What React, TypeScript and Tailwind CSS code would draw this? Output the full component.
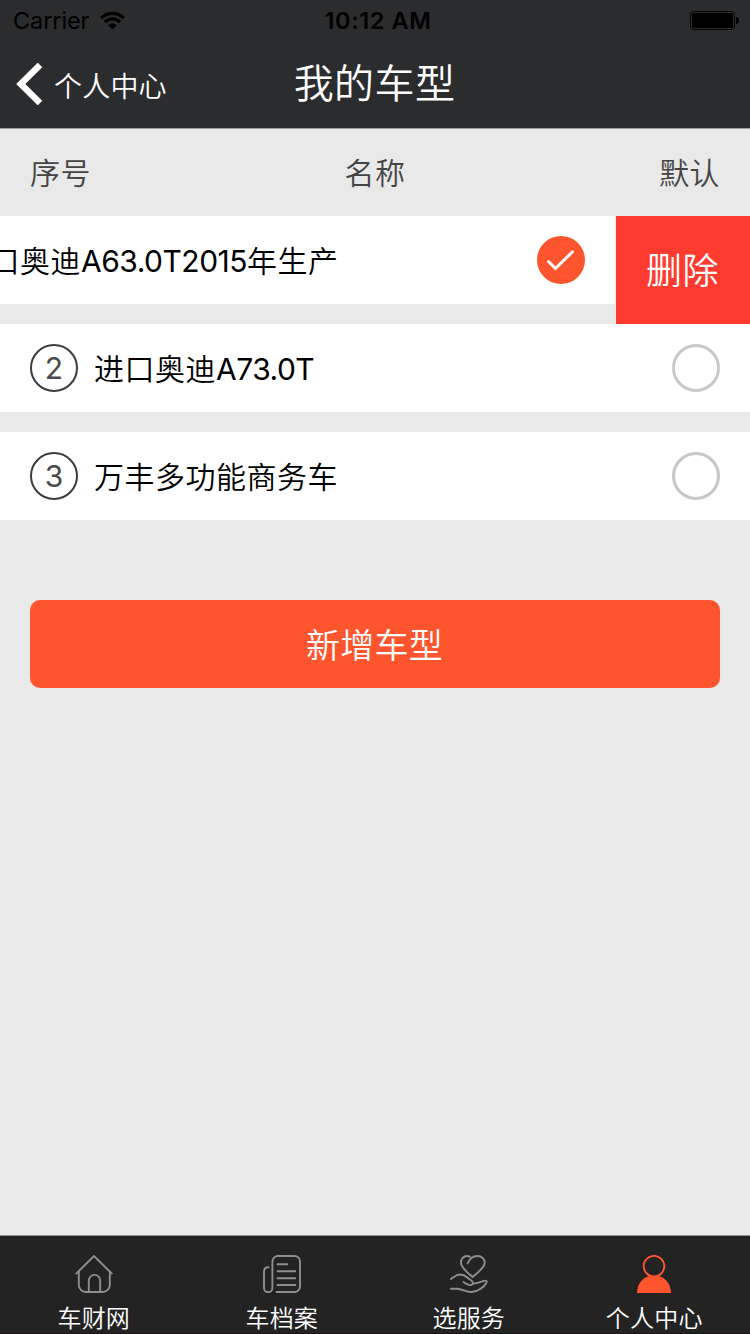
import React, { useState } from 'react';

interface Car {
  id: number;
  name: string;
}

interface CarRowProps {
  car: Car;
  selected: boolean;
  swiped: boolean;
  onSelect: () => void;
  onDelete: () => void;
}

const initialCars: Car[] = [
  { id: 1, name: '进口奥迪A63.0T2015年生产' },
  { id: 2, name: '进口奥迪A73.0T' },
  { id: 3, name: '万丰多功能商务车' }
];

const tabs = [
  { label: '车财网', icon: HomeIcon, className: '' },
  { label: '车档案', icon: FileIcon, className: 'pl-px' },
  { label: '选服务', icon: ServiceIcon, className: '' },
  { label: '个人中心', icon: UserIcon, className: 'pr-1' }
];

function HomeIcon() {
  return (
    <svg width="38" height="38" viewBox="0 0 38 38" fill="none" stroke="#8e8e8e" strokeWidth="1.9" strokeLinecap="round">
      <path d="M1.2 18.6 19 1l17.8 17.6" />
      <path d="M3.8 16.5V30a7 7 0 0 0 7 7h17a7 7 0 0 0 7-7V16.5" />
      <path d="M13.8 37V25.6a5.7 5.7 0 0 1 11.4 0V37" />
    </svg>
  );
}

function FileIcon() {
  return (
    <svg width="38" height="38" viewBox="0 0 38 38" fill="none" stroke="#8e8e8e" strokeWidth="1.9" strokeLinecap="round">
      <path d="M5.5 12.2C2.6 12.2 1 13.9 1 16.7V33a4.2 4.2 0 0 0 8.4 0V6.5A5.5 5.5 0 0 1 14.9 1H31.5A5.5 5.5 0 0 1 37 6.5v25a5.5 5.5 0 0 1-5.5 5.5h-18" />
      <path d="M14.5 9.3h9.8M14.5 16.3h17.8M14.5 23.3h17.8M14.5 30h17.8" />
    </svg>
  );
}

function ServiceIcon() {
  return (
    <svg width="38" height="38" viewBox="0 0 38 38" fill="none" stroke="#8e8e8e" strokeWidth="1.9" strokeLinecap="round" strokeLinejoin="round">
      <path d="M17.6 8.4C19 5 22.5 1 27.5 1c4.2 0 7.2 3 7.2 6.8 0 5-6.7 9.5-12.2 14.2C17.5 17.5 11 13 11 7.5 11 4 13.5 1 17 1c1 0 2 .2 2.8.8" />
      <path d="M.9 24C4 21.5 6.5 19.5 10 19.5c5 0 6.5 2.5 9.5 4.7 2.5 1.5 4.2 2.5 3.2 4.6-1.2 2.5-5.5 1-9.2-1.8" />
      <path d="M22.8 28.6c4.5 0 8-1.8 11.2-2.8 2-.6 3.3.5 2.3 2.2C34.5 31.5 28 37 21.5 37 16 37 12 34 7 33.8H1" />
    </svg>
  );
}

function UserIcon() {
  return (
    <svg width="34" height="38" viewBox="0 0 34 38" fill="none">
      <path d="M0 38C0 28 7 20.2 17 20.2S34 28 34 38Z" fill="#ff552e" />
      <circle cx="17" cy="11.2" r="10.3" fill="#232323" stroke="#ff552e" strokeWidth="1.9" />
    </svg>
  );
}

function StatusBar() {
  return (
    <div className="flex h-10 items-center justify-between pl-[13px] pr-[11px] text-black">
      <div className="flex flex-1 items-center gap-[11px]">
        <span className="pt-px text-[23.5px] leading-10 tracking-[-0.1px]">Carrier</span>
        <svg width="25" height="19" viewBox="0 0 25 19" fill="none" stroke="currentColor" strokeWidth="3.2">
          <path d="M1.2 7C7.5.7 17.5.7 23.8 7" />
          <path d="M5 11c4.3-4.2 10.7-4.2 15 0" />
          <path d="M8.2 14.3c2.6-2.3 6-2.3 8.6 0L12.5 18.5Z" fill="currentColor" stroke="none" />
        </svg>
      </div>
      <span className="pl-[4px] pt-px text-[23.5px] font-semibold leading-10 tracking-[0.6px]">10:12 AM</span>
      <div className="flex flex-1 items-center justify-end gap-px">
        <div className="h-[19px] w-[45px] rounded-[4px] border border-black p-px">
          <div className="h-full rounded-[2px] bg-black" />
        </div>
        <div className="h-[7px] w-[3px] rounded-r-full bg-black" />
      </div>
    </div>
  );
}

// Latin letters and digits are set a little tighter than the Chinese text
function CarName({ name }: { name: string }) {
  return (
    <span className="ml-4 flex-1 whitespace-nowrap pt-px text-[30px] leading-[44px] tracking-[0.5px] text-black">
      {name.split(/([A-Z0-9.]+)/).map((part, i) =>
        i % 2 ? <span key={i} className="font-normal tracking-[-0.5px]">{part}</span> : part
      )}
    </span>
  );
}

function CarRow({ car, selected, swiped, onSelect, onDelete }: CarRowProps) {
  return (
    <li className={`flex h-[108px] ${swiped ? '-ml-[135px] w-[885px]' : 'w-[750px]'}`}>
      <div className="flex h-[88px] w-[750px] shrink-0 items-center bg-white px-[30px]">
        <span className="flex h-12 w-12 items-center justify-center rounded-full border-2 border-[#3c3c3c] text-[30px] font-normal text-[#4a4a4a]">
          {car.id}
        </span>
        <CarName name={car.name} />
        <button onClick={onSelect} className="h-12 w-12">
          {selected ? (
            <svg width="48" height="48" viewBox="0 0 48 48" fill="none">
              <circle cx="24" cy="24" r="24" fill="#ff552e" />
              <path d="m11.5 25.5 7 7L35.5 15.8" stroke="#fff" strokeWidth="3" strokeLinecap="round" />
            </svg>
          ) : (
            <span className="block h-12 w-12 rounded-full border-3 border-[#c7c7c7]" />
          )}
        </button>
      </div>
      {swiped && (
        <button onClick={onDelete} className="ml-px h-[108px] w-[134px] bg-[#ff3b30] pr-px pt-0.5 text-[36px] tracking-[0.4px] text-white">
          删除
        </button>
      )}
    </li>
  );
}

export default function App() {
  const [cars, setCars] = useState(initialCars);
  const [selectedId, setSelectedId] = useState(1);
  const [activeTab, setActiveTab] = useState(3);

  const handleDelete = (id: number) => {
    setCars(prev => prev.filter(car => car.id !== id));
  };

  return (
    <div className="flex h-[1334px] w-[750px] flex-col overflow-hidden bg-[#e9e9e9] font-['Inter','Noto_Sans_CJK_SC',sans-serif]">
      <header className="h-[129px] shrink-0 border-b border-[#9a9a9a] bg-[#2b2c2e]">
        <StatusBar />
        <div className="grid h-[88px] grid-cols-3 items-center font-[350] text-white">
          <button className="flex items-center gap-[11px] pl-4">
            <svg width="27" height="42" viewBox="0 0 27 42" fill="none" stroke="currentColor" strokeWidth="6.5">
              <path d="M24 2 4.8 21 24 40" />
            </svg>
            <span className="pt-[6px] text-[28px] leading-10 tracking-[0.2px]">个人中心</span>
          </button>
          <h1 className="pb-px pr-px text-center text-[40px] leading-[56px] tracking-[0.4px]">我的车型</h1>
        </div>
      </header>

      <main className="flex-1">
        <div className="flex h-[87px] items-center justify-between px-[30px] pt-px text-[30px] font-[350] tracking-[0.4px] text-[#444]">
          <span>序号</span>
          <span>名称</span>
          <span>默认</span>
        </div>
        <ul className="overflow-hidden font-[350]">
          {cars.map(car => (
            <CarRow
              key={car.id}
              car={car}
              selected={car.id === selectedId}
              swiped={car.id === 1}
              onSelect={() => setSelectedId(car.id)}
              onDelete={() => handleDelete(car.id)}
            />
          ))}
        </ul>
        <div className="px-[30px] pt-[60px]">
          <button className="h-[88px] w-full rounded-[10px] bg-[#ff552e] pr-px pt-0.5 text-[34px] font-[350] tracking-[0.3px] text-white">
            新增车型
          </button>
        </div>
      </main>

      <nav className="grid h-[99px] shrink-0 grid-cols-4 border-b border-t border-b-[#1c1217] border-t-[#8d9190] bg-[#232323]">
        {tabs.map(({ label, icon: Icon, className }, index) => (
          <button
            key={label}
            onClick={() => setActiveTab(index)}
            aria-selected={index === activeTab}
            className={`flex flex-col items-center pt-[19px] ${className}`}
          >
            <Icon />
            <span className="mt-2 text-[24px] font-[350] leading-9 tracking-[0.2px] text-white">{label}</span>
          </button>
        ))}
      </nav>
    </div>
  );
}
